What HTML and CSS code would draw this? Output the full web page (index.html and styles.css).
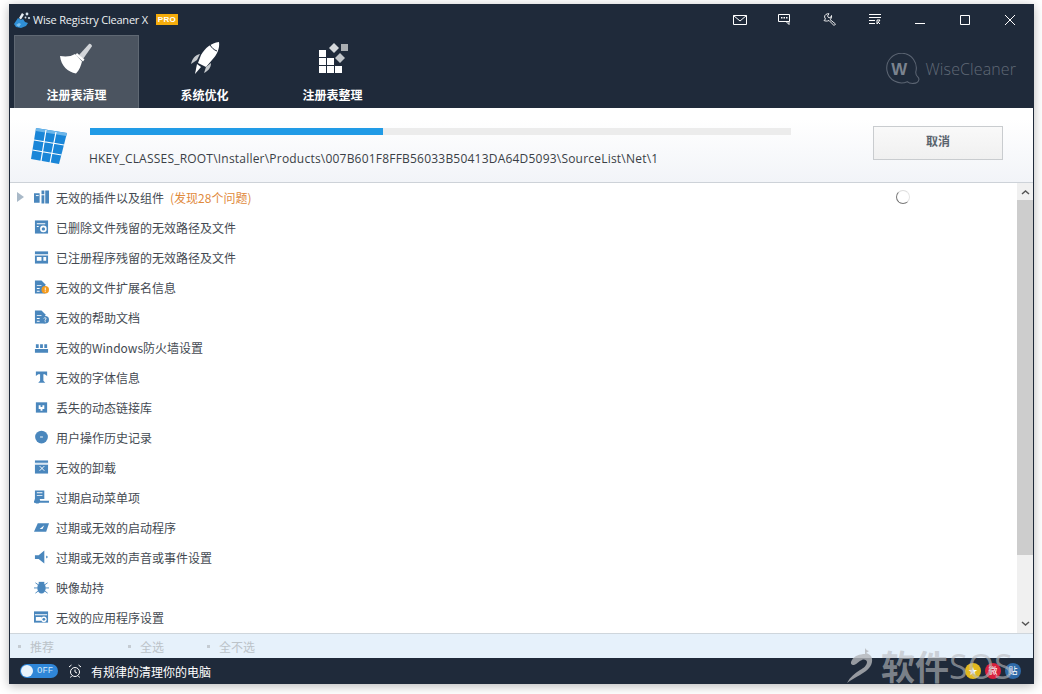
FILE: index.html
```html
<!DOCTYPE html>
<html lang="zh">
<head>
<meta charset="utf-8">
<title>Wise Registry Cleaner X</title>
<link rel="stylesheet" href="styles.css">
</head>
<body>
<div class="window">
  <header class="head">
    <div class="titlebar">
      <svg class="logo" width="18" height="17" viewBox="0 0 18 17"><path d="M1 13l4-6 3 2 2-1 2 3 3 1-2 3-5 2-5-1z" fill="#2f8fd6"/><path d="M6 7l3-5 2 1.500-3 5z" fill="#e8eef4"/><path d="M3 14l3-2 2 1-2 3z" fill="#7cc0ee"/><circle cx="14" cy="3" r="1.400" fill="#d8e4ee"/><circle cx="16" cy="7" r="1.100" fill="#d8e4ee"/><circle cx="12.500" cy="6.500" r=".9" fill="#d8e4ee"/></svg>
      <span class="apptitle">Wise Registry Cleaner X</span>
      <span class="pro">PRO</span>
      <div class="winbtns">
        <svg class="wb" width="14" height="10" viewBox="0 0 14 10"><path d="M.5.500h13v9H.5zM.5.500L7 6l6.500-5.500" fill="none" stroke="#fff"/></svg>
        <svg class="wb" width="13" height="11" viewBox="0 0 13 11"><path d="M.5.500h11v7h-11zM8 7.500l3 3v-3" fill="none" stroke="#fff"/><path d="M3 3h1.500v1.500H3zM5.500 3H7v1.500H5.500zM8 3h1.500v1.500H8z" fill="#fff"/></svg>
        <svg class="wb" width="14" height="13" viewBox="0 0 14 13"><path d="M6 .7L4.500 3l1.500 2 2-1 .5-1.500C8.800 4.500 8 6 7 6.500l5.500 4.500-1.500 1.500L6 7.500C4 8.500 2 8 1 7.500L2.500 6 1.500 4C1.500 2 3.500.5 6 .7z" fill="none" stroke="#fff" stroke-width=".9"/></svg>
        <svg class="wb" width="12" height="11" viewBox="0 0 12 11"><path d="M0 .500h12M0 3.500h12M0 6.500h6M0 9.500h6" stroke="#fff" fill="none"/><path d="M8 6h3L8 10zM9 8l2 2" stroke="#fff" fill="none"/></svg>
        <svg class="wb" width="10" height="10" viewBox="0 0 10 10"><path d="M0 8.500h10" stroke="#fff" fill="none"/></svg>
        <svg class="wb" width="10" height="10" viewBox="0 0 10 10"><path d="M.5.500h9v9h-9z" stroke="#fff" fill="none"/></svg>
        <svg class="wb" width="10" height="10" viewBox="0 0 10 10"><path d="M0 0l10 10M10 0L0 10" stroke="#fff" fill="none"/></svg>
      </div>
    </div>
    <div class="navrow">
      <nav class="tabs">
        <div class="tab active">
          <svg width="36" height="36" viewBox="0 0 36 36"><path d="M20 15L30 4c1-1 3.500 1 2.800 2.500L24 19z" fill="#d2d5d9"/><path d="M18 13l7.500 6.500-1.500 2-7.500-6.500z" fill="#fff"/><path d="M1 16c6 1 11 .5 15-2l7 7.500c-1 4-2.500 8.500-6 12C9 32 2 26 1 16z" fill="#fff"/></svg>
          <span>注册表清理</span>
        </div>
        <div class="tab">
          <svg width="36" height="36" viewBox="0 0 36 36"><path d="M32 2c-8 1-14 6-18 13l-3 8 8 4 6-7c5-5 8-12 7-18z" fill="#fff"/><path d="M23 5c2 3 4 5 7 6" stroke="#1f2a3a" fill="none"/><path d="M13 14C8 15 5 19 4 24l6-4zM24 23c0 5-3 8-7 10l2-6z" fill="#c4c8cc"/><path d="M10 24l4 3-6 7z" fill="#fff"/></svg>
          <span>系统优化</span>
        </div>
        <div class="tab">
          <svg width="36" height="36" viewBox="0 0 36 36"><path d="M4 10h7v7H4zM4 18h7v7H4zM12 18h7v7h-7zM4 26h7v7H4zM12 26h7v7h-7zM20 26h7v7h-7z" fill="#fff"/><path d="M19 3l5 5-5 5-5-5z" fill="#d6d9dc"/><path d="M25 13l5 5-5 5-5-5z" fill="#c2c6ca"/><path d="M26 4h7v7h-7z" fill="#a9adb1"/></svg>
          <span>注册表整理</span>
        </div>
      </nav>
      <div class="brand">
        <svg width="38" height="32" viewBox="0 0 36 30"><path d="M31 18a14 14 0 1 0-8 9c2 2 10 3 11-2 .5-3-3-2-3-7z" fill="none" stroke="#5b6472" stroke-width="1"/><text x="15.500" y="21" text-anchor="middle" class="brand-w">W</text></svg>
        <span>WiseCleaner</span>
      </div>
    </div>
  </header>

  <section class="scan">
    <svg class="cube" width="38" height="38" viewBox="0 0 38 38"><path d="M5 1l31 5-8 31L0 32z" fill="#1a86d8"/><path d="M5 1l31 5-1 3L5 4z" fill="#6cb6ea"/><path d="M15 3L10 34M25 5l-6 31M3 13l30 5M1.500 23l29 5" stroke="#fff" stroke-width="1.200" fill="none"/></svg>
    <div class="progress-col">
      <div class="progress"><div class="progress-fill"></div></div>
      <div class="path">HKEY_CLASSES_ROOT\Installer\Products\007B601F8FFB56033B50413DA64D5093\SourceList\Net\1</div>
    </div>
    <button class="cancel">取消</button>
  </section>

  <section class="listwrap">
    <ul class="list">
      <li class="row"><i class="tri"></i><svg class="ic" viewBox="0 0 16 14"><path d="M0 3h6v10H0zM8 0h3v4H8zM12 0h4v14h-4zM8 5h3v9H8z" fill="#4a87bd"/><path d="M2 5h3v1H2z" fill="#fff"/></svg><span>无效的插件以及组件</span><em>(发现28个问题)</em><span class="spinner"></span></li>
      <li class="row"><svg class="ic" viewBox="0 0 16 14"><path d="M1 0h14v14H1z" fill="#4a87bd"/><circle cx="10" cy="9" r="3.500" fill="#fff"/><circle cx="10" cy="9" r="1.800" fill="#4a87bd"/><path d="M3 3h9v1H3zM3 6h2v1H3z" fill="#fff"/></svg><span>已删除文件残留的无效路径及文件</span></li>
      <li class="row"><svg class="ic" viewBox="0 0 16 14"><path d="M1 1h14v13H1z" fill="#4a87bd"/><path d="M1 4h14v1.500H1zM3 7h5v4H3zM10 7h3v4h-3z" fill="#fff"/></svg><span>已注册程序残留的无效路径及文件</span></li>
      <li class="row"><svg class="ic" viewBox="0 0 16 14"><path d="M1 0h7l4 4v10H1z" fill="#4a87bd"/><path d="M3 5h5v1H3zM3 8h3v1H3zM3 11h3v1H3z" fill="#fff"/><circle cx="12" cy="10" r="4" fill="#f39a1e"/><path d="M11.500 7.500h1v3h-1zM11.500 11h1v1h-1z" fill="#fff"/></svg><span>无效的文件扩展名信息</span></li>
      <li class="row"><svg class="ic" viewBox="0 0 16 14"><path d="M1 0h7l4 4v10H1z" fill="#4a87bd"/><path d="M3 5h5v1H3zM3 8h3v1H3zM3 11h3v1H3z" fill="#fff"/><circle cx="12" cy="10" r="4" fill="#4a87bd"/><path d="M10.500 8.500c1-1.500 3-.5 2 1l-.7.800v.7M11.500 12h1" stroke="#fff" fill="none"/></svg><span>无效的帮助文档</span></li>
      <li class="row"><svg class="ic" viewBox="0 0 16 14"><path d="M1 9h14v4H1zM2 4h3v4H2zM6.500 4h3v4h-3zM11 4h3v4h-3z" fill="#4a87bd"/></svg><span>无效的Windows防火墙设置</span></li>
      <li class="row"><svg class="ic" viewBox="0 0 16 14"><path d="M2 1h12v5l-2.500-2H10v7l2 2H4.500l2-2V4H4.500L2 6z" fill="#4a87bd"/></svg><span>无效的字体信息</span></li>
      <li class="row"><svg class="ic" viewBox="0 0 16 14"><path d="M2 2h12v11H2z" fill="#4a87bd"/><path d="M5 5h2v2h2V5h2v4H9v2H7V9H5z" fill="#fff"/></svg><span>丢失的动态链接库</span></li>
      <li class="row"><svg class="ic" viewBox="0 0 16 14"><circle cx="8" cy="7" r="6.800" fill="#4a87bd"/><path d="M6.500 6.500h3v1h-3z" fill="#fff"/></svg><span>用户操作历史记录</span></li>
      <li class="row"><svg class="ic" viewBox="0 0 16 14"><path d="M1 0h14v14H1z" fill="#4a87bd"/><path d="M1 3h14v1H1zM6 6l5 5M11 6l-5 5" stroke="#fff" fill="none"/></svg><span>无效的卸载</span></li>
      <li class="row"><svg class="ic" viewBox="0 0 16 14"><path d="M1 0h10v9H1zM0 11h16v2H0z" fill="#4a87bd"/><circle cx="3.500" cy="11" r="3" fill="#4a87bd"/><path d="M3 2h6v1H3zM3 5h6v1H3z" fill="#fff"/></svg><span>过期启动菜单项</span></li>
      <li class="row"><svg class="ic" viewBox="0 0 16 14"><path d="M4 3h12l-3 9H0z" fill="#4a87bd"/><path d="M6 9l5-4-2 4z" fill="#fff"/></svg><span>过期或无效的启动程序</span></li>
      <li class="row"><svg class="ic" viewBox="0 0 16 14"><path d="M1 5h4l6-5v14l-6-5H1zM13 5.500l2 1.500-2 1.500z" fill="#4a87bd"/></svg><span>过期或无效的声音或事件设置</span></li>
      <li class="row"><svg class="ic" viewBox="0 0 16 14"><ellipse cx="8" cy="8" rx="4.500" ry="6" fill="#4a87bd"/><path d="M5 1.500h6v2H5z" fill="#4a87bd"/><path d="M1.500 2.500L5 5M14.500 2.500L11 5M0 8h4M16 8h-4M1.500 13.500L5 11M14.500 13.500L11 11" stroke="#4a87bd" fill="none"/></svg><span>映像劫持</span></li>
      <li class="row"><svg class="ic" viewBox="0 0 16 14"><path d="M0 1h15v12H0z" fill="#4a87bd"/><path d="M1 4h13v1H1zM2 7h6v4H2z" fill="#fff"/><circle cx="10.500" cy="9.500" r="3" fill="#fff"/><circle cx="10.500" cy="9.500" r="1.500" fill="#4a87bd"/></svg><span>无效的应用程序设置</span></li>
    </ul>
    <div class="scrollbar">
      <svg class="arrow" width="9" height="6" viewBox="0 0 9 6"><path d="M1 5l3.500-3L8 5" stroke="#555" stroke-width="1.500" fill="none"/></svg>
      <div class="thumb"></div>
      <svg class="arrow" width="9" height="6" viewBox="0 0 9 6"><path d="M1 1l3.500 3L8 1" stroke="#555" stroke-width="1.500" fill="none"/></svg>
    </div>
  </section>

  <section class="select">
    <span class="sel sel-a">推荐</span>
    <span class="sel sel-b">全选</span>
    <span class="sel">全不选</span>
  </section>

  <footer class="foot">
    <span class="toggle"><i class="knob"></i>OFF</span>
    <svg class="clock" width="14" height="14" viewBox="0 0 14 14"><circle cx="7" cy="8" r="4.500" fill="none" stroke="#fff"/><path d="M7 5.500V8l2 1M1 3l2.500-2M13 3l-2.500-2M3.500 12L2.500 13.500M10.500 12l1 1.500" stroke="#fff" fill="none"/></svg>
    <span class="foot-text">有规律的清理你的电脑</span>
    <div class="social">
      <span class="coin coin-y">★</span>
      <span class="coin coin-r">微</span>
      <span class="coin coin-b">贴</span>
    </div>
  </footer>
  <div class="watermark">
    <svg width="30" height="38" viewBox="0 0 30 38"><path d="M20 1c1 2 3 3 4 3l-3 2c4 1 7 4 6 9-1 6-7 10-12 13-4 2-9 5-13 8 3-6 8-10 13-13 4-2 7-5 7-8 0-2-3-3-5-2-3 1-5 4-8 5-3 0-4-2-2-5 2-4 8-6 13-6z" fill="#b4b6ba"/></svg>
    <span class="wm-cn">软件</span><span class="wm-en">SOS</span>
  </div>
</div>
</body>
</html>
```
FILE: styles.css
```css
* { box-sizing: border-box; }
html, body { margin: 0; padding: 0; background: #fff; }
body { width: 1042px; height: 694px; overflow: hidden; padding: 4px 0 0 9px; font-family: "Noto Sans CJK SC", "Open Sans", sans-serif; }
.window { position: relative; width: 1025px; height: 680px; display: flex; flex-direction: column; background: #fff; border-left: 1px solid #1f2a3a; border-right: 1px solid #1f2a3a; box-shadow: 0 2px 10px rgba(0,0,0,.28); }

.head { height: 104px; background: #1f2a3a; color: #fff; display: flex; flex-direction: column; flex: none; }
.titlebar { height: 31px; display: flex; align-items: center; padding-left: 3px; flex: none; }
.logo { flex: none; }
.apptitle { font: 11px "Open Sans", sans-serif; letter-spacing: -.2px; color: #eef1f4; margin-left: 2px; white-space: nowrap; }
.pro { margin-left: 8px; width: 22px; height: 11px; background: #f5ac0b; color: #fff; font: bold 8px/11px "Liberation Sans", sans-serif; text-align: center; letter-spacing: .4px; }
.winbtns { margin-left: auto; display: grid; grid-template-columns: repeat(7, 45px); justify-items: center; align-items: center; padding-right: 1px; }
.navrow { flex: 1; display: flex; justify-content: space-between; }
.tabs { display: flex; gap: 3px; padding-left: 4px; }
.tab { width: 125px; height: 73px; display: flex; flex-direction: column; align-items: center; padding-top: 4px; border: 1px solid transparent; border-bottom: 0; font-size: 12px; font-weight: 700; color: #fff; }
.tab span { margin-top: 9px; line-height: 20px; white-space: nowrap; }
.tab svg { flex: none; }
.tab.active { background: #4b5460; border-color: #5f6873; }
.brand { display: flex; align-items: center; padding: 0 17px 6px 0; color: #606976; font: 300 16px "Open Sans", sans-serif; letter-spacing: .1px; }
.brand span { margin-left: 4px; }
.brand-w { font: bold 16px "Liberation Sans", sans-serif; fill: #7b838f; }

.scan { height: 75px; flex: none; display: flex; background: linear-gradient(#fff 15%, #f2f4f8); border-bottom: 1px solid #cdd2d8; position: relative; }
.cube { flex: none; margin: 19px 0 0 21px; }
.progress-col { width: 701px; margin: 20px 0 0 21px; }
.progress { height: 7px; background: #ececec; }
.progress-fill { width: 293px; height: 7px; background: #219be6; }
.path { margin: 15px 0 0 -1px; font: 12px/18px "Open Sans", sans-serif; letter-spacing: .21px; color: #3a3f46; white-space: nowrap; }
.cancel { width: 130px; height: 34px; margin: 18px 0 0 82px; border: 1px solid #c9cccf; background: linear-gradient(#f9f9f9, #f0f0f0); color: #5a646e; font: 700 12px/14px "Noto Sans CJK SC", sans-serif; padding: 0 0 4px; }

.listwrap { flex: 1; min-height: 0; display: flex; position: relative; }
.list { flex: 1; margin: -1px 0 0; padding: 0; list-style: none; }
.row { height: 30px; display: flex; align-items: center; padding-left: 24px; font-size: 12px; color: #444a52; position: relative; white-space: nowrap; }
.row em { font-style: normal; color: #df8a3c; margin-left: 6px; }
.ic { width: 15px; height: 14px; flex: none; margin-right: 7px; }
.tri { position: absolute; left: 7px; top: 10px; width: 0; height: 0; border-left: 7px solid #a9b9c8; border-top: 5px solid transparent; border-bottom: 5px solid transparent; }
.spinner { position: absolute; left: 886px; top: 8px; width: 14px; height: 14px; border-radius: 50%; border: 1px solid #777; border-top-color: #ddd; border-right-color: #e4e4e4; }
.scrollbar { width: 16px; flex: none; background: #f0f0f0; display: flex; flex-direction: column; align-items: center; justify-content: space-between; padding: 6px 0; position: relative; }
.thumb { position: absolute; left: 0; right: 0; top: 17px; height: 355px; background: #cdcdcd; }

.select { height: 25px; flex: none; background: #e6f1fb; border-top: 1px solid #cfd6dc; display: flex; align-items: center; padding-left: 20px; font-size: 12px; color: #bcc3c9; }
.sel { position: relative; }
.sel::before { content: ""; position: absolute; left: -12px; top: 7px; width: 3px; height: 3px; background: #c5ccd3; }
.sel-a { margin-right: 86px; }
.sel-b { margin-right: 55px; }

.foot { height: 26px; flex: none; background: #1f2a3a; display: flex; align-items: center; padding-left: 10px; color: #fff; font-size: 12px; }
.toggle { width: 38px; height: 14px; border-radius: 7px; background: #2f86d8; color: #cfe6f8; font: 9px/14px "Liberation Mono", monospace; padding-left: 17px; position: relative; }
.knob { position: absolute; left: 1px; top: 1px; width: 12px; height: 12px; background: #e8f3fc; border-radius: 50%; }
.clock { margin-left: 10px; }
.foot-text { margin-left: 9px; }
.social { margin-left: auto; display: flex; gap: 4px; padding-right: 12px; }
.coin { width: 16px; height: 16px; border-radius: 50%; display: block; font-size: 9px; line-height: 16px; text-align: center; color: #fff; }
.coin-y { background: #e2b920; }
.coin-r { background: #d9213c; }
.coin-b { background: #2f6aa8; }

.watermark { position: absolute; left: 835px; bottom: -1px; display: flex; align-items: center; color: rgba(185,187,191,.62); line-height: 38px; pointer-events: none; white-space: nowrap; }
.watermark svg { opacity: .8; margin-right: 6px; }
.wm-cn { font: 700 34px/38px "Noto Sans CJK SC", sans-serif; }
.wm-en { font: 400 34px/38px "Open Sans", sans-serif; }
```
